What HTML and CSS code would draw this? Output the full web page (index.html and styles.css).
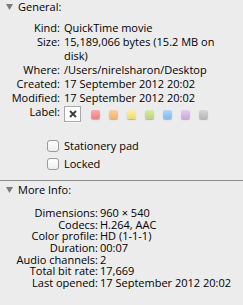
FILE: index.html
```html
<!DOCTYPE html>
<html lang="en">
<head>
  <meta charset="UTF-8" />
  <title>Get Info</title>
  <meta name="viewport" content="width=device-width, initial-scale=1.0" />
  <link rel="stylesheet" href="styles.css">
</head>
<body>
  <!-- General -->
  <section class="group">
    <div class="group-head">
      <svg class="disclosure" width="7" height="6" viewBox="0 0 7 6"><path d="M0 0H7L3.5 6Z" /></svg>
      General:
    </div>
    <dl class="info info-general">
      <dt>Kind:</dt><dd>QuickTime movie</dd>
      <dt>Size:</dt><dd>15,189,066 bytes (15.2 MB on disk)</dd>
      <dt>Where:</dt><dd>/Users/nirelsharon/Desktop</dd>
      <dt>Created:</dt><dd>17 September 2012 20:02</dd>
      <dt>Modified:</dt><dd>17 September 2012 20:02</dd>
      <dt>Label:</dt>
      <dd class="labels">
        <span class="label-none">
          <svg width="8" height="8" viewBox="0 0 8 8"><path d="M1 1L7 7M7 1L1 7" /></svg>
        </span>
        <span class="swatch red"></span>
        <span class="swatch orange"></span>
        <span class="swatch yellow"></span>
        <span class="swatch green"></span>
        <span class="swatch blue"></span>
        <span class="swatch purple"></span>
        <span class="swatch grey"></span>
      </dd>
    </dl>
    <div class="options">
      <label class="check"><span class="box"></span>Stationery pad</label>
      <label class="check"><span class="box"></span>Locked</label>
    </div>
  </section>

  <!-- More Info -->
  <section class="group more">
    <div class="group-head">
      <svg class="disclosure" width="7" height="6" viewBox="0 0 7 6"><path d="M0 0H7L3.5 6Z" /></svg>
      More Info:
    </div>
    <dl class="info info-more">
      <dt>Dimensions:</dt><dd>960 × 540</dd>
      <dt>Codecs:</dt><dd>H.264, AAC</dd>
      <dt>Color profile:</dt><dd>HD (1-1-1)</dd>
      <dt>Duration:</dt><dd>00:07</dd>
      <dt>Audio channels:</dt><dd>2</dd>
      <dt>Total bit rate:</dt><dd>17,669</dd>
      <dt>Last opened:</dt><dd>17 September 2012 20:02</dd>
    </dl>
  </section>
</body>
</html>
```

FILE: styles.css
```css
body {
  margin: 0;
  background: #ececec;
  color: #000;
  font-family: "Open Sans", sans-serif;
  font-size: 11px;
  line-height: 14px;
  overflow: hidden;
}
.group-head {
  display: flex;
  align-items: center;
  gap: 5px;
  padding-left: 6px;
  height: 14px;
}
.disclosure {
  fill: #7b7b7b;
  margin-top: -1px;
}
.info {
  display: grid;
  margin: 7px 0 0;
  align-items: start;
}
.info dt {
  text-align: right;
}
.info dd {
  margin: 0;
}
.info-general {
  grid-template-columns: 60px 1fr;
  column-gap: 4px;
  padding-right: 8px;
}
.info-more {
  grid-template-columns: 98px 1fr;
  column-gap: 2px;
  margin-top: 10px;
  line-height: 11.67px;
}
.info-more dd {
  white-space: nowrap;
}
.labels {
  display: flex;
  align-items: center;
  gap: 9px;
  margin-top: 1px !important;
}
.label-none {
  width: 17px;
  height: 16px;
  box-sizing: border-box;
  border: 1px solid #a9a9a9;
  background: #fff;
  display: flex;
  align-items: center;
  justify-content: center;
  margin-right: 1px;
  box-shadow: 0 1px 0 rgba(255, 255, 255, 0.6);
}
.label-none path {
  stroke: #3c3c3c;
  stroke-width: 1.8;
  fill: none;
}
.swatch {
  width: 9px;
  height: 9px;
  border-radius: 2px;
  box-shadow: 0 1px 1px rgba(0, 0, 0, 0.25);
}
.red { background: linear-gradient(#fcaaaa, #f37d7d); }
.orange { background: linear-gradient(#fdd09c, #f9b066); }
.yellow { background: linear-gradient(#fbf1a0, #f1dc6a); }
.green { background: linear-gradient(#d9eca4, #b9d573); }
.blue { background: linear-gradient(#b0d8fd, #7cb9f6); }
.purple { background: linear-gradient(#e8cbf1, #cfa2e0); }
.grey { background: linear-gradient(#d6d6d6, #b6b6b6); }
.options {
  padding: 15px 0 7px 47px;
}
.check {
  display: flex;
  align-items: center;
  gap: 5px;
  height: 18px;
}
.check .box {
  width: 12px;
  height: 12px;
  box-sizing: border-box;
  border: 1px solid #9b9b9b;
  border-radius: 3px;
  background: linear-gradient(#ffffff, #eeeeee);
}
.more {
  border-top: 1px solid #8c8c8c;
  padding-top: 2px;
}
```
